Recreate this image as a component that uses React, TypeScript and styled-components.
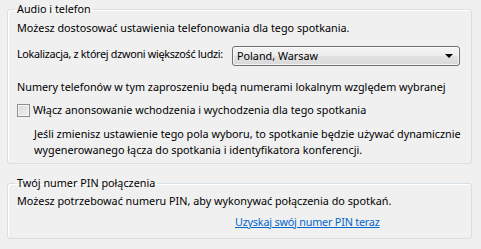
import React from "react";
import styled, { createGlobalStyle } from "styled-components";

const Global = createGlobalStyle`
  html, body { margin: 0; padding: 0; background: #f0f0f0; }
  body {
    font-family: "Noto Sans", "Open Sans", sans-serif;
    font-size: 10.8px;
    color: #000;
  }
`;

const Page = styled.div`
  width: 481px;
  height: 249px;
  box-sizing: border-box;
  padding: 1px 9px 0 7px;
  display: flex;
  flex-direction: column;
  gap: 11px;
  background: #f0f0f0;
  overflow: hidden;
`;

const Group = styled.fieldset<{ $pb: number }>`
  margin: 0;
  padding: 0 9px ${(p) => p.$pb}px 9px;
  border: 1px solid #d5dfe5;
  border-radius: 3px;
  box-shadow: inset 1px 1px 0 #ffffff;
  display: flex;
  flex-direction: column;
  min-width: 0;
`;

const Legend = styled.legend`
  margin-left: -2px;
  padding: 0 2px;
  line-height: 16px;
  height: 16px;
`;

const Line = styled.div<{ $mt: number; $indent?: number }>`
  margin-top: ${(p) => p.$mt}px;
  padding-left: ${(p) => p.$indent ?? 0}px;
  line-height: 16px;
  white-space: nowrap;
`;

const Row = styled.div<{ $mt: number }>`
  margin-top: ${(p) => p.$mt}px;
  display: grid;
  grid-template-columns: 215px 228px;
  align-items: center;
  height: 20px;
`;

const Label = styled.span`
  line-height: 16px;
  margin-top: -4px;
  white-space: nowrap;
  letter-spacing: -0.3px;
`;

const Combo = styled.div`
  position: relative;
  box-sizing: border-box;
  width: 228px;
  height: 20px;
  border: 1px solid #707070;
  border-radius: 3px;
  background: linear-gradient(#f4f4f4 0%, #ececec 50%, #e2e2e2 51%, #d9d9d9 100%);
  box-shadow: inset 0 0 0 1px rgba(255, 255, 255, 0.7);
  display: flex;
  align-items: center;
  padding-left: 4px;
  line-height: 16px;
`;

const Arrow = styled.span`
  position: absolute;
  right: 6px;
  top: 7px;
  width: 0;
  height: 0;
  border-left: 4px solid transparent;
  border-right: 4px solid transparent;
  border-top: 4px solid #000;
`;

const CheckRow = styled.label`
  display: flex;
  align-items: center;
  gap: 3px;
  line-height: 16px;
  white-space: nowrap;
`;

const Box = styled.span`
  box-sizing: border-box;
  width: 13px;
  height: 13px;
  border: 1px solid #8f8f8f;
  background: linear-gradient(135deg, #d8d8d8 0%, #f2f2f2 100%);
  box-shadow: inset 0 0 0 1px #f6f6f6;
  flex: none;
`;

const Link = styled.a`
  color: #0066cc;
  text-decoration: underline;
  letter-spacing: -0.2px;
  cursor: pointer;
`;

export default function App() {
  return (
    <>
      <Global />
      <Page>
        <Group $pb={5}>
          <Legend>Audio i telefon</Legend>
          <Line $mt={3}>Możesz dostosować ustawienia telefonowania dla tego spotkania.</Line>
          <Row $mt={10}>
            <Label>Lokalizacja, z której dzwoni większość ludzi:</Label>
            <Combo>
              Poland, Warsaw
              <Arrow />
            </Combo>
          </Row>
          <Line $mt={13}>Numery telefonów w tym zaproszeniu będą numerami lokalnym względem wybranej</Line>
          <Line $mt={7}>
            <CheckRow>
              <Box />
              Włącz anonsowanie wchodzenia i wychodzenia dla tego spotkania
            </CheckRow>
          </Line>
          <Line $mt={8} $indent={17}>
            Jeśli zmienisz ustawienie tego pola wyboru, to spotkanie będzie używać dynamicznie
            <br />
            wygenerowanego łącza do spotkania i identyfikatora konferencji.
          </Line>
        </Group>
        <Group $pb={8}>
          <Legend>Twój numer PIN połączenia</Legend>
          <Line $mt={2}>Możesz potrzebować numeru PIN, aby wykonywać połączenia do spotkań.</Line>
          <Line $mt={5} $indent={218}>
            <Link>Uzyskaj swój numer PIN teraz</Link>
          </Line>
        </Group>
      </Page>
    </>
  );
}
